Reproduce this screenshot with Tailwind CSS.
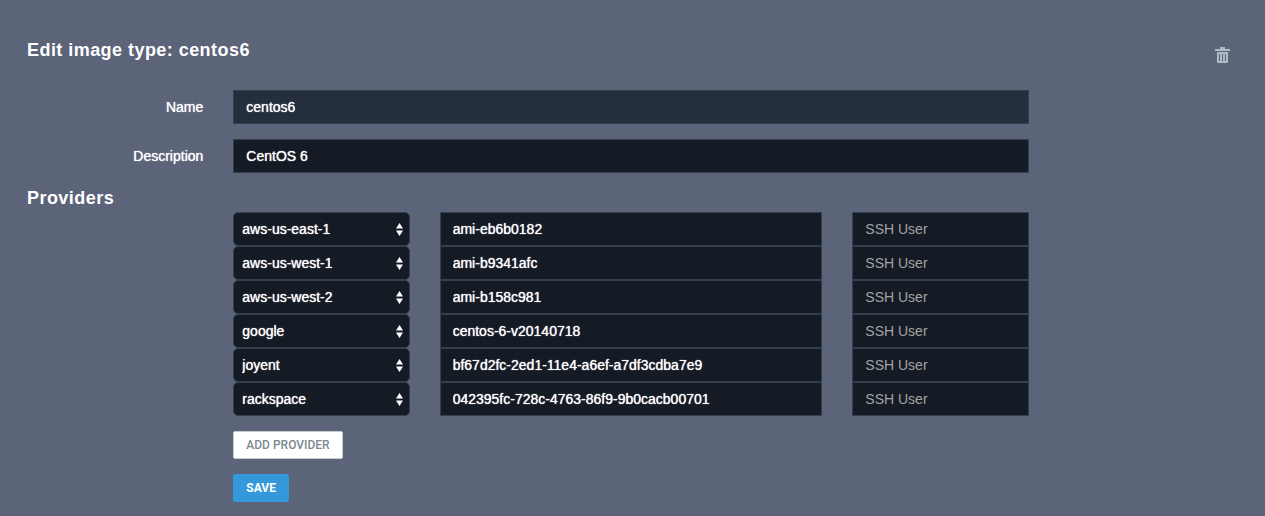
<!DOCTYPE html>
<html lang="en">
<head>
<meta charset="utf-8">
<meta name="viewport" content="width=device-width, initial-scale=1">
<title>Edit image type</title>
<script src="https://cdn.jsdelivr.net/npm/@tailwindcss/browser@4"></script>
</head>
<body class="min-h-screen bg-[#5c6479] pt-9 pr-[30px] pb-3 pl-[27px] font-['Liberation_Sans',Arial,sans-serif] text-sm text-white">
<form>
  <header class="flex items-start justify-between">
    <h1 class="text-lg font-bold tracking-wide">Edit image type: centos6</h1>
    <button type="button" aria-label="Delete image type" class="mt-[11px] mr-[5px] text-[#b0bac6]">
      <svg class="block" width="15" height="16" viewBox="0 0 15 16" fill="currentColor"><path d="M5 0h5v2h5v2H0V2h5z"/><path fill-rule="evenodd" d="M2 5h11v10q0 1-1 1H3q-1 0-1-1zM4 7v7h1V7zM7 7v7h1V7zM10 7v7h1V7z"/></svg>
    </button>
  </header>

  <div class="mt-[26px] grid grid-cols-12 items-center gap-x-[30px] gap-y-[15px]">
    <label for="name" class="col-span-2 text-right text-shadow-[0_0_1px_#fff]">Name</label>
    <input id="name" value="centos6" readonly class="col-span-8 h-[34px] w-full border border-[#34404f] bg-[#252e3d] px-3 text-shadow-[0_0_1px_#fff] outline-none">
    <label for="description" class="col-span-2 col-start-1 text-right text-shadow-[0_0_1px_#fff]">Description</label>
    <input id="description" value="CentOS 6" class="col-span-8 h-[34px] w-full border border-[#34404f] bg-[#151b24] px-3 text-shadow-[0_0_1px_#fff] outline-none">
  </div>

  <h2 class="mt-[11px] text-lg font-bold tracking-wide">Providers</h2>

  <div id="providers"></div>

  <div class="mt-[15px] grid grid-cols-12 gap-x-[30px]">
    <div class="col-span-8 col-start-3 flex flex-col items-start gap-[15px]">
      <button type="button" class="h-7 rounded-xs border border-[#cccccc] bg-white px-3 font-[Roboto,sans-serif] text-xs font-medium whitespace-nowrap text-[#7b8a8e]">ADD PROVIDER</button>
      <button type="submit" class="h-7 rounded-xs border border-[#3498db] bg-[#3498db] px-3 font-[Roboto,sans-serif] text-xs font-bold text-white">SAVE</button>
    </div>
  </div>
</form>

<template id="provider-row">
  <div class="grid grid-cols-12 gap-x-[30px]">
    <div class="relative col-span-2 col-start-3">
      <select aria-label="Provider" class="block h-[34px] w-full appearance-none rounded-[5px] border border-[#34404f] bg-[#151b24] pr-6 pl-2 text-shadow-[0_0_1px_#fff] outline-none"></select>
      <svg class="pointer-events-none absolute top-[11px] right-[7px]" width="7" height="13" viewBox="0 0 7 13" fill="#fff"><path d="M3.500 0 7 5.500H0zM0 7.500h7L3.500 13z"/></svg>
    </div>
    <input aria-label="Image" class="image col-span-4 h-[34px] w-full border border-[#34404f] bg-[#151b24] px-3 text-shadow-[0_0_1px_#fff] outline-none">
    <input aria-label="SSH User" placeholder="SSH User" class="col-span-2 h-[34px] w-full border border-[#34404f] bg-[#151b24] px-3 outline-none placeholder:text-[#a3a3a3]">
  </div>
</template>
<script>
  const providers = [
    ['aws-us-east-1', 'ami-eb6b0182'],
    ['aws-us-west-1', 'ami-b9341afc'],
    ['aws-us-west-2', 'ami-b158c981'],
    ['google', 'centos-6-v20140718'],
    ['joyent', 'bf67d2fc-2ed1-11e4-a6ef-a7df3cdba7e9'],
    ['rackspace', '042395fc-728c-4763-86f9-9b0cacb00701'],
  ];
  const list = document.getElementById('providers');
  const template = document.getElementById('provider-row');
  for (const [name, image] of providers) {
    const row = template.content.cloneNode(true);
    const select = row.querySelector('select');
    for (const [option] of providers) select.add(new Option(option, option));
    select.value = name;
    row.querySelector('.image').value = image;
    list.append(row);
  }
</script>
</body>
</html>
